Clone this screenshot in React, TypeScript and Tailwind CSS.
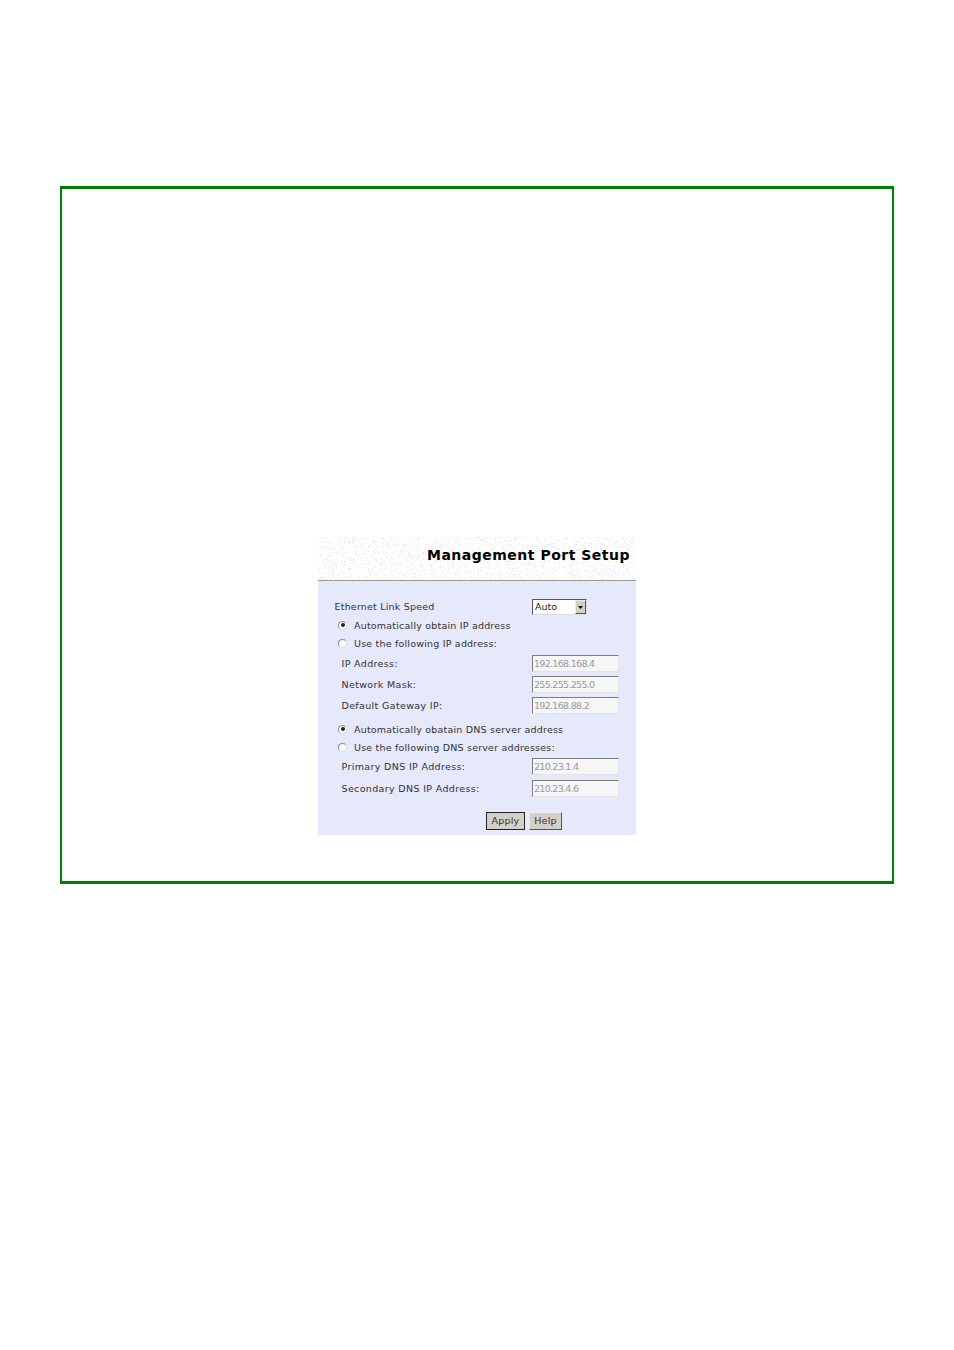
import React from 'react';

const font = "font-['DejaVu_Sans',sans-serif]";

// speckled header texture, generated once from a fixed seed
const specks: { x: number; y: number; o: number }[] = [];
let seed = 7;
const rnd = () => {
  seed = (seed * 16807) % 2147483647;
  return seed / 2147483647;
};
for (let i = 0; i < 2600; i++) {
  const x = Math.floor(rnd() * 318);
  const y = Math.floor(rnd() * 43);
  specks.push({ x, y, o: 0.06 + rnd() * 0.14 });
}

const Field = ({ label, value, className = '' }: { label: string; value: string; className?: string }) => (
  <div className={`flex items-center justify-between pl-[23.500px] pr-[17px] ${className}`}>
    <span className="text-[9.5px] leading-3 tracking-[0.35px] text-[#333]">{label}</span>
    <div className="h-[17px] w-[87px] border border-[#7d7d7d] border-r-[#e4e4e4] border-b-[#e4e4e4] bg-[#f6f6f6] pl-px text-[9.5px] leading-[15px] tracking-[-0.7px] text-[#999]">
      {value}
    </div>
  </div>
);

const Radio = ({ label, checked, className = '' }: { label: string; checked?: boolean; className?: string }) => (
  <div className={`flex items-center pl-5 ${className}`}>
    <span className="flex h-[9px] w-[9px] -translate-y-px items-center justify-center rounded-full border border-[#8a8a8a] border-r-[#ddd] border-b-[#ddd] bg-white">
      {checked && <span className="h-[4px] w-[4px] rounded-full bg-[#222]" />}
    </span>
    <span className="ml-[7px] text-[9.5px] leading-3 tracking-[0.2px] text-[#333]">{label}</span>
  </div>
);

const Btn = ({ children, className = '' }: { children: React.ReactNode; className?: string }) => (
  <div className={`flex h-[18px] items-center justify-center bg-[#d4d0c8] text-[9.5px] tracking-[0.2px] text-[#333] ${className}`}>
    {children}
  </div>
);

const App = () => {
  return (
    <div className={`h-[1350px] w-[954px] bg-white pl-[60px] pt-[186px] ${font}`}>
      <div className="flex h-[698px] w-[834px] justify-center border-x-2 border-y-[3px] border-[#008000] pt-[348px]">
        <div className="h-[298px] w-[318px] bg-[#e6e8fb]">
          <div className="relative h-[44px] border-b border-[#9a9a9a] bg-white">
            <svg className="absolute left-0 top-0" width="318" height="43">
              {specks.map((s, i) => (
                <rect key={i} x={s.x} y={s.y} width="1" height="1" fill="#8a8a8a" opacity={s.o} />
              ))}
            </svg>
            <div className="absolute right-[6px] top-[9px] text-[14px] font-bold leading-[18px] tracking-[0.5px] text-black">
              Management Port Setup
            </div>
          </div>

          <div className="flex items-center justify-between pl-[16.500px] pr-[49px] pt-[18px]">
            <span className="text-[9.5px] leading-3 tracking-[0.2px] text-[#333]">Ethernet Link Speed</span>
            <div className="flex h-[16px] w-[55px] items-center justify-between border border-[#555] border-r-[#ddd] border-b-[#ddd] bg-white pl-[2px] text-[9.5px] text-[#222]">
              Auto
              <span className="flex h-[14px] w-[11px] items-center justify-center border border-[#555] border-t-[#eee] border-l-[#eee] bg-[#d4d0c8]">
                <svg width="5" height="3" viewBox="0 0 5 3"><path d="M0 0h5L2.500 3z" fill="#000" /></svg>
              </span>
            </div>
          </div>
          <Radio label="Automatically obtain IP address" checked className="mt-[5px]" />
          <Radio label="Use the following IP address:" className="mt-[6px]" />
          <Field label="IP Address:" value="192.168.168.4" className="mt-[5px]" />
          <Field label="Network Mask:" value="255.255.255.0" className="mt-[4px]" />
          <Field label="Default Gateway IP:" value="192.168.88.2" className="mt-[4px]" />
          <Radio label="Automatically obatain DNS server address" checked className="mt-[10px]" />
          <Radio label="Use the following DNS server addresses:" className="mt-[6px]" />
          <Field label="Primary DNS IP Address:" value="210.23.1.4" className="mt-[4px]" />
          <Field label="Secondary DNS IP Address:" value="210.23.4.6" className="mt-[5px]" />
          <div className="mt-[15px] flex justify-end gap-[4px] pr-[74px]">
            <Btn className="w-[39px] border border-[#222]">Apply</Btn>
            <Btn className="w-[33px] border border-[#555] border-t-[#eee] border-l-[#eee]">Help</Btn>
          </div>
        </div>
      </div>
    </div>
  );
};

export default App;
